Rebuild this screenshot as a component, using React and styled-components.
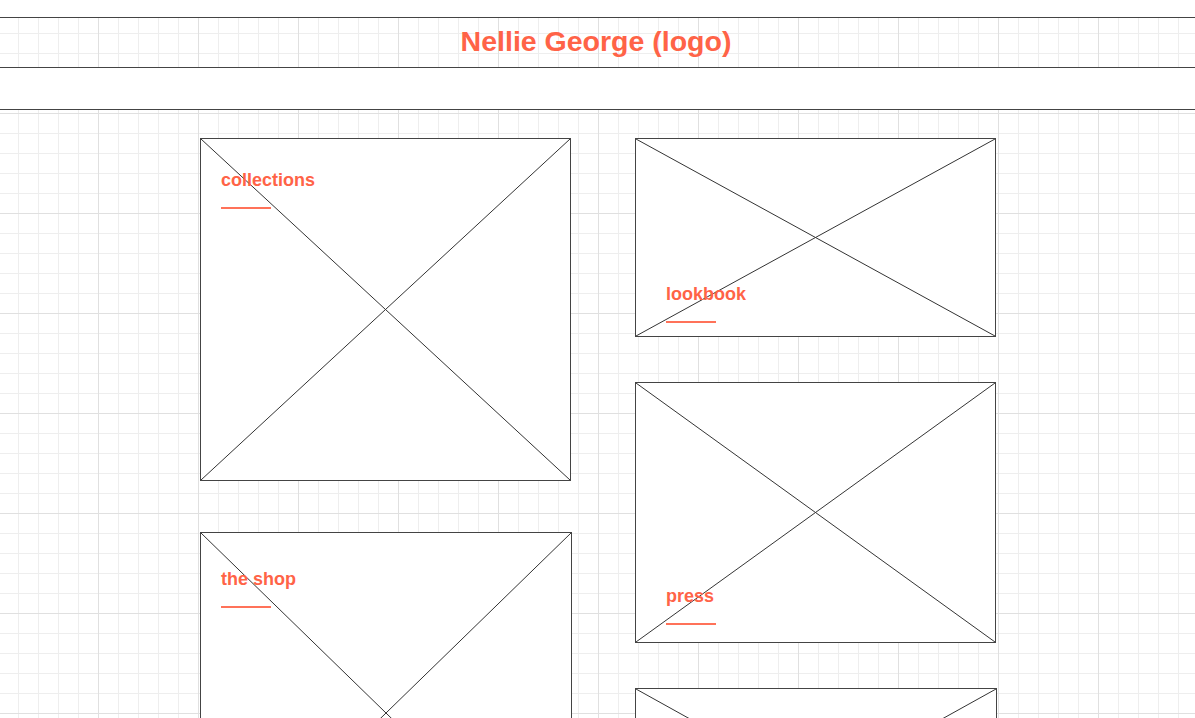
import React from "react";
import styled, { createGlobalStyle } from "styled-components";

const GlobalStyle = createGlobalStyle`
  html, body {
    margin: 0;
    padding: 0;
  }
  body {
    font-family: "Liberation Sans", Arial, sans-serif;
    background-color: #fff;
    background-image:
      linear-gradient(to right, #e0e0e0 1px, transparent 1px),
      linear-gradient(to bottom, #e0e0e0 1px, transparent 1px),
      linear-gradient(to right, #eeeeee 1px, transparent 1px),
      linear-gradient(to bottom, #eeeeee 1px, transparent 1px);
    background-size: 100px 100px, 100px 100px, 20px 20px, 20px 20px;
    background-position: 98px 13px, 98px 13px, 18px 13px, 18px 13px;
  }
`;

const Page = styled.div`
  min-height: 100vh;
`;

const TopGap = styled.div`
  height: 17px;
  background: #fff;
`;

const Header = styled.header`
  height: 49px;
  border-top: 1px solid #444;
  border-bottom: 1px solid #444;
  display: flex;
  align-items: center;
  justify-content: center;
`;

const Logo = styled.h1`
  margin: 0;
  font-size: 28.5px;
  font-weight: 700;
  color: #ff6347;
  line-height: 32px;
  padding-bottom: 3px;
  padding-right: 3px;
`;

const Nav = styled.nav`
  height: 41px;
  background: #fff;
  border-bottom: 1px solid #444;
`;

const Grid = styled.main`
  display: flex;
  justify-content: center;
  gap: 62px;
  padding: 28px 0 0 3px;
`;

const Column = styled.div`
  display: flex;
  flex-direction: column;
  gap: ${(p) => p.$gap}px;
  width: ${(p) => p.$width}px;
`;

const Tile = styled.a`
  position: relative;
  box-sizing: border-box;
  display: flex;
  flex-direction: column;
  justify-content: ${(p) => (p.$bottom ? "flex-end" : "flex-start")};
  width: ${(p) => p.$width}px;
  height: ${(p) => p.$height}px;
  padding: ${(p) => p.$pad};
  border: 1px solid #444;
  background: #fff;
  text-decoration: none;
`;

const Cross = styled.svg`
  position: absolute;
  inset: 0;
  width: 100%;
  height: 100%;
`;

const Label = styled.span`
  position: relative;
  font-size: 18px;
  line-height: 20px;
  font-weight: 700;
  color: #ff6347;
`;

const Rule = styled.span`
  position: relative;
  display: block;
  width: 50px;
  height: 2px;
  margin-top: 17px;
  background: #ff6347;
  opacity: 0.9;
`;

const Placeholder = ({ label, ...rest }) => (
  <Tile href="#" {...rest}>
    <Cross viewBox="0 0 100 100" preserveAspectRatio="none">
      <line x1="0" y1="0" x2="100" y2="100" stroke="#333" strokeWidth="1" vectorEffect="non-scaling-stroke" />
      <line x1="100" y1="0" x2="0" y2="100" stroke="#333" strokeWidth="1" vectorEffect="non-scaling-stroke" />
    </Cross>
    {label && (
      <>
        <Label>{label}</Label>
        <Rule />
      </>
    )}
  </Tile>
);

export default function App() {
  return (
    <Page>
      <GlobalStyle />
      <TopGap />
      <Header>
        <Logo>Nellie George (logo)</Logo>
      </Header>
      <Nav />
      <Grid>
        <Column $width={373} $gap={51}>
          <Placeholder label="collections" $width={371} $height={343} $pad="31px 20px 0" />
          <Placeholder label="the shop" $width={372} $height={362} $pad="36px 20px 0" />
        </Column>
        <Column $width={363} $gap={45}>
          <Placeholder label="lookbook" $bottom $width={361} $height={199} $pad="0 30px 13px" />
          <Placeholder label="press" $bottom $width={361} $height={261} $pad="0 30px 17px" />
          <Placeholder $width={362} $height={202} $pad="0" />
        </Column>
      </Grid>
    </Page>
  );
}
